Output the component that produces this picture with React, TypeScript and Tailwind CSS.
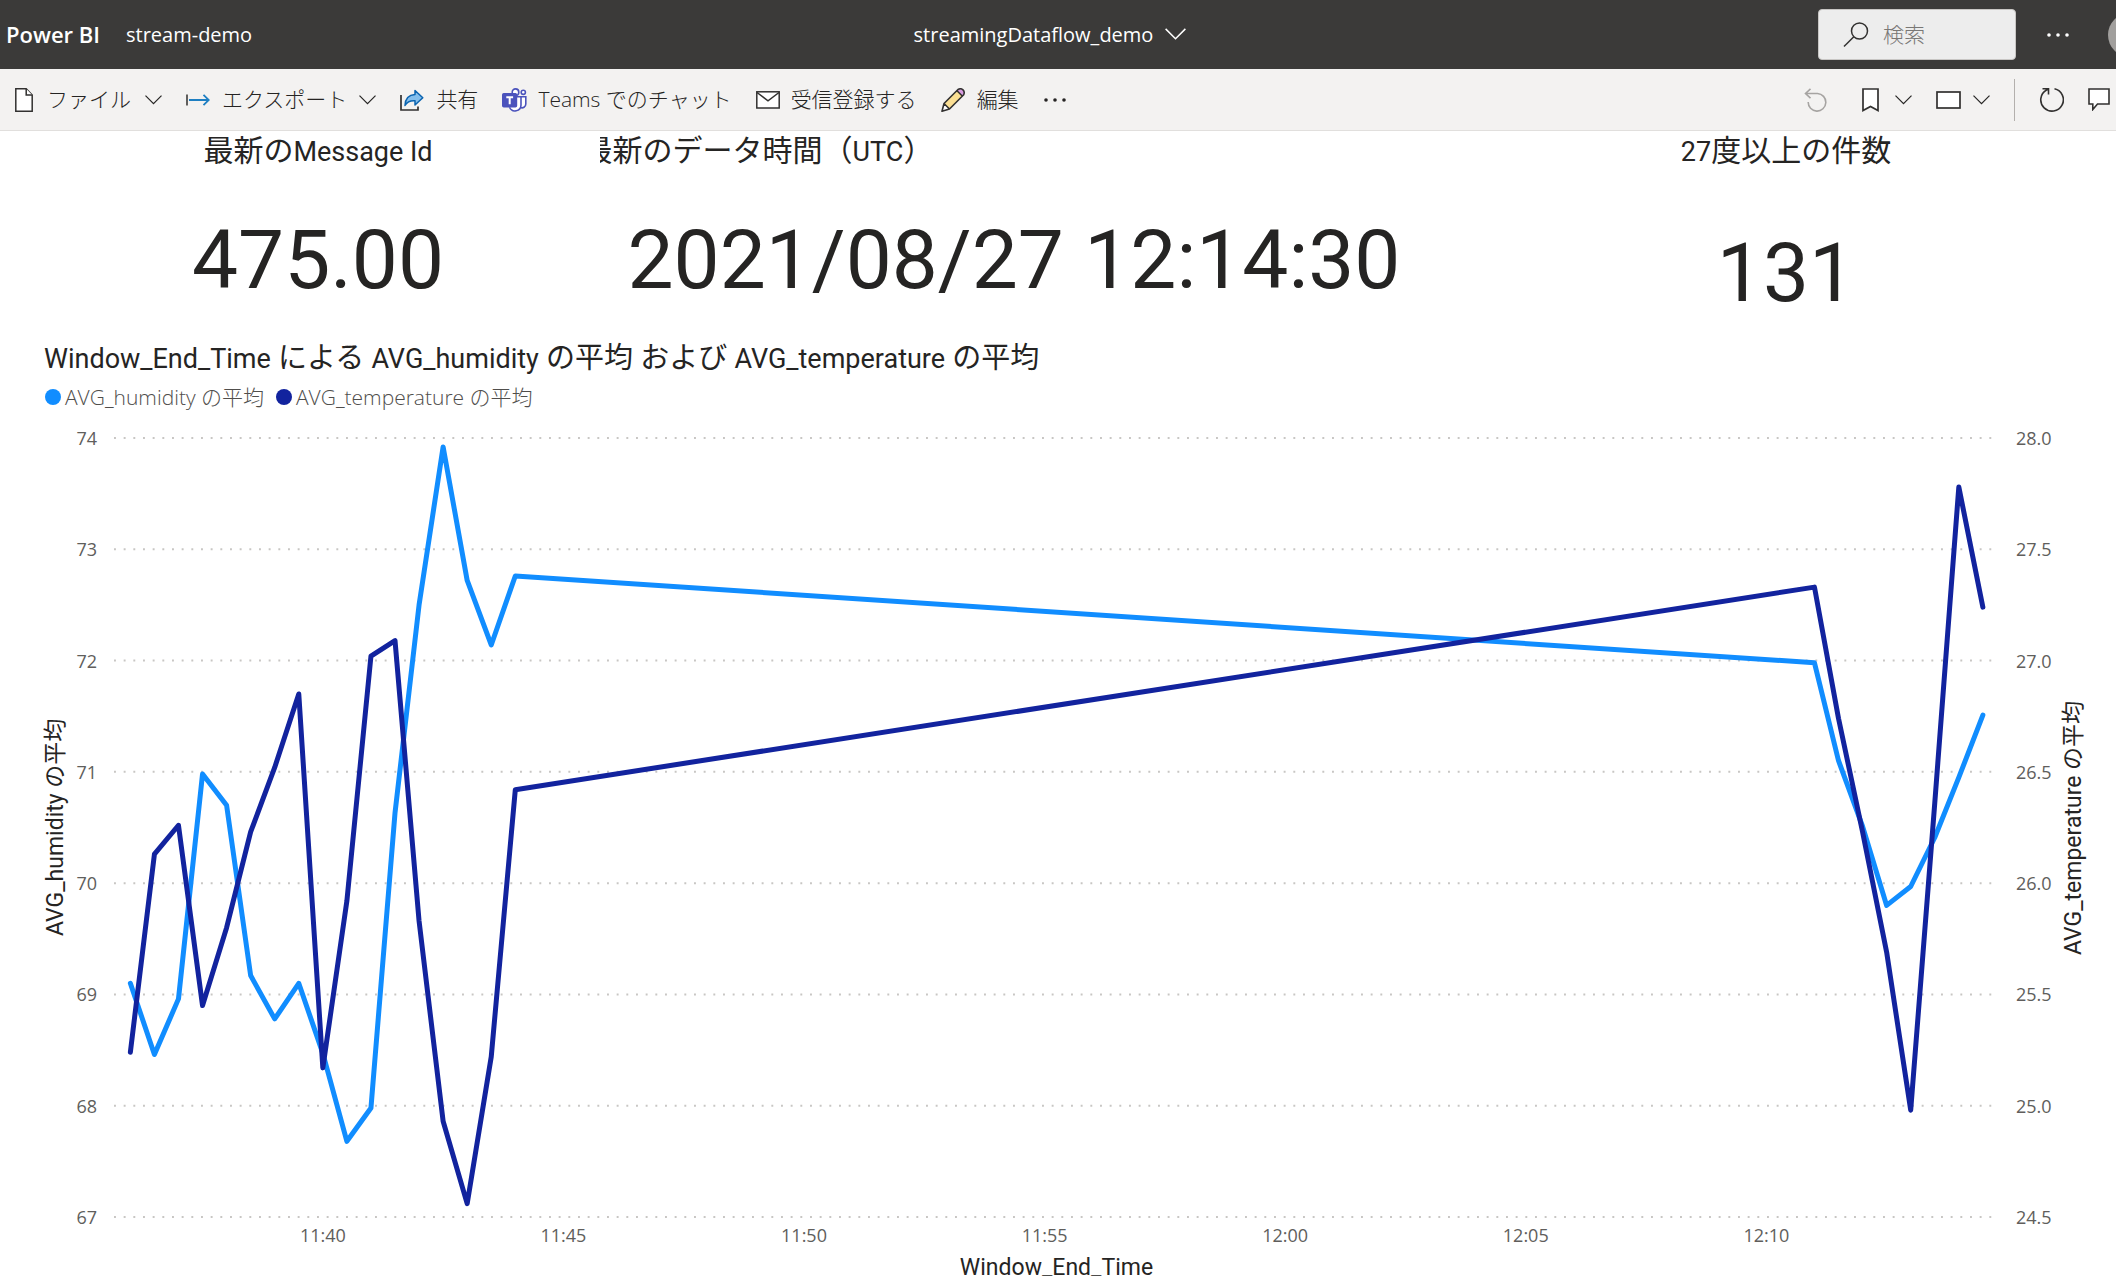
import React from "react";

const UI = "font-['Open_Sans','Noto_Sans_CJK_JP',sans-serif]";
const DIN = "font-['Roboto','Noto_Sans_CJK_JP',sans-serif]";

/* Samples are [half-minute steps after 11:36:00, value]. */
const humidity: [number, number][] = [
  [0, 69.1], [1, 68.46], [2, 68.96], [3, 70.98], [4, 70.7], [5, 69.17], [6, 68.78], [7, 69.1], [8, 68.47],
  [9, 67.68], [10, 67.98], [11, 70.63], [12, 72.5], [13, 73.92], [14, 72.72], [15, 72.14], [16, 72.76],
  [70, 71.98], [71, 71.1], [72, 70.51], [73, 69.8], [74, 69.97], [75, 70.41], [76, 70.95], [77, 71.51],
];
const temperature: [number, number][] = [
  [0, 25.24], [1, 26.13], [2, 26.26], [3, 25.45], [4, 25.8], [5, 26.23], [6, 26.52], [7, 26.85], [8, 25.17],
  [9, 25.92], [10, 27.02], [11, 27.09], [12, 25.83], [13, 24.93], [14, 24.56], [15, 25.22], [16, 26.42],
  [70, 27.33], [71, 26.74], [72, 26.23], [73, 25.69], [74, 24.98], [75, 26.36], [76, 27.78], [77, 27.24],
];
const humidityTicks = ["74", "73", "72", "71", "70", "69", "68", "67"];
const temperatureTicks = ["28.0", "27.5", "27.0", "26.5", "26.0", "25.5", "25.0", "24.5"];
const timeTicks: [string, number][] = [
  ["11:40", 8], ["11:45", 18], ["11:50", 28], ["11:55", 38], ["12:00", 48], ["12:05", 58], ["12:10", 68],
];
const PAD = 0.68;
const SPAN = 78.35;

const toPoints = (data: [number, number][], max: number, scale: number) =>
  data.map(([x, v]) => `${x + PAD},${(max - v) * scale}`).join(" ");

/* Sets the Latin runs of a Japanese title a little smaller than its kanji. */
function Mixed({ text }: { text: string }) {
  return (
    <>
      {text.split(/([A-Za-z0-9_]+(?: [A-Za-z]+)*)/).map((part, i) =>
        i % 2 ? <span key={i} className="text-[27px]">{part}</span> : part
      )}
    </>
  );
}

function Chevron({ className = "w-[17px]" }: { className?: string }) {
  return (
    <svg viewBox="0 0 17 10" className={className} fill="none" stroke="currentColor" aria-hidden="true">
      <path d="M.5 .7 8.5 8.7 16.5 .7" strokeWidth="1.2" />
    </svg>
  );
}

function Dots() {
  return (
    <svg viewBox="0 0 24 6" className="w-6" fill="currentColor" aria-hidden="true">
      <circle cx="3" cy="3" r="1.8" /><circle cx="12" cy="3" r="1.8" /><circle cx="21" cy="3" r="1.8" />
    </svg>
  );
}

function FileIcon() {
  return (
    <svg viewBox="0 0 18 24" className="w-[18px]" fill="#fff" stroke="#323130" strokeWidth="1.5" aria-hidden="true">
      <path d="M.8.8h10.4l6 6.2v16.2H.8z" /><path d="M11.2.8V7h6" />
    </svg>
  );
}
function ExportIcon() {
  return (
    <svg viewBox="0 0 24 12" className="w-6" fill="none" aria-hidden="true">
      <path d="M1 .5v11" stroke="#3b3a39" strokeWidth="1.6" />
      <path d="M3 6h20M17.5 .8 22.8 6l-5.3 5.2" stroke="#1e7fc2" strokeWidth="1.8" />
    </svg>
  );
}
function ShareIcon() {
  return (
    <svg viewBox="0 0 24 22" className="w-6" fill="none" aria-hidden="true">
      <path d="M1 6v15h17v-3.500" stroke="#323130" strokeWidth="1.7" />
      <path d="M15 1.500 22.800 8.800 15 16v-4.200C10.500 11.500 7 13 5 16.500 5.300 10 9 6 15 5.600z" fill="#83beec" stroke="#0b64b0" strokeWidth="1.5" strokeLinejoin="round" />
    </svg>
  );
}
function TeamsIcon() {
  return (
    <svg viewBox="0 0 25 24" className="w-[25px]" fill="none" stroke="#4b53bc" strokeWidth="1.6" aria-hidden="true">
      <circle cx="13.500" cy="4.200" r="3.300" fill="#fff" />
      <circle cx="21.300" cy="4.300" r="2.100" fill="#fff" />
      <path d="M17 8.800h6.800v7.200a3.800 3.800 0 0 1-5.500 3.400" fill="#fff" />
      <path d="M8 8.800h11v8.200a6 6 0 0 1-11.500 2.300" fill="#fff" />
      <rect x=".8" y="5.800" width="13.600" height="13" rx="1" fill="#4b53bc" />
      <path d="M4.300 9.300h6.800M7.700 9.300v7" stroke="#fff" strokeWidth="2" />
    </svg>
  );
}
function MailIcon() {
  return (
    <svg viewBox="0 0 24 18" className="w-6" fill="#fff" stroke="#323130" strokeWidth="1.5" aria-hidden="true">
      <rect x=".8" y=".8" width="22.400" height="16.200" /><path d="m1 1.500 11 8.300L23 1.500" fill="none" />
    </svg>
  );
}
function PencilIcon() {
  return (
    <svg viewBox="0 0 25 24" className="w-[25px]" strokeLinejoin="round" aria-hidden="true">
      <path d="m3 15.500 14-14q3-1.600 5 .300t.700 5L8.500 21 1 23.200z" fill="#fbdf93" />
      <path d="m16.200 2.500 1.800-1.300q2.600-1 4.300.800t.700 4.300L21.500 8.300z" fill="#d79be0" />
      <path d="m3 15.500 5.500 5.500L1 23.200z" fill="#fff" />
      <path d="m3 15.500 14-14q3-1.600 5 .300t.700 5L8.500 21 1 23.200zl5.500 5.500M16 2.700l5.500 5.500" fill="none" stroke="#323130" strokeWidth="1.6" />
    </svg>
  );
}
function SearchIcon() {
  return (
    <svg viewBox="0 0 26 26" className="w-[26px] shrink-0" fill="none" stroke="#323130" strokeWidth="1.5" aria-hidden="true">
      <circle cx="16.500" cy="9" r="8" /><path d="M10.800 14.700 1 24.500" />
    </svg>
  );
}
function UndoIcon() {
  return (
    <svg viewBox="0 0 24 24" className="w-6" fill="none" stroke="#a6a4a2" strokeWidth="1.6" aria-hidden="true">
      <path d="M1.500 5.500h12a8.800 8.800 0 1 1-9.300 8.500M6.500 .8 1.500 5.500l5 4.700" />
    </svg>
  );
}
function BookmarkIcon() {
  return (
    <svg viewBox="0 0 17 24" className="w-[17px]" fill="#fff" stroke="#323130" strokeWidth="1.7" aria-hidden="true">
      <path d="M1 1h15v21.500l-7.500-4-7.500 4z" />
    </svg>
  );
}
function ViewIcon() {
  return (
    <svg viewBox="0 0 25 18" className="w-[25px]" fill="#fff" stroke="#323130" strokeWidth="1.7" aria-hidden="true">
      <rect x="1" y="1" width="23" height="16" />
    </svg>
  );
}
function RefreshIcon() {
  return (
    <svg viewBox="0 0 25 25" className="w-[25px]" fill="none" stroke="#323130" strokeWidth="1.6" aria-hidden="true">
      <path d="M15.500 1.800A11.300 11.300 0 1 1 7.500 3L9.500 2.200M3.500 1.800h6v5.700" />
    </svg>
  );
}
function CommentIcon() {
  return (
    <svg viewBox="0 0 22 23" className="w-[22px]" fill="#fff" stroke="#323130" strokeWidth="1.6" aria-hidden="true">
      <path d="M1 1h20v15H9.500L4.800 21.500V16H1z" />
    </svg>
  );
}

function ToolButton({ icon, label, menu, className = "" }: { icon: React.ReactNode; label: string; menu?: boolean; className?: string }) {
  return (
    <button type="button" className={`flex shrink-0 items-center whitespace-nowrap ${className}`}>
      {icon}
      <span>{label}</span>
      {menu && <Chevron className="w-[17px]" />}
    </button>
  );
}

function Header() {
  return (
    <header className="grid h-[69px] shrink-0 grid-cols-[1fr_auto_1fr] items-center bg-[#3b3a39] text-white">
      <div className="flex items-center gap-[26px] pl-[6px]">
        <a href="#home" className="text-[22px] font-semibold">Power BI</a>
        <a href="#workspace" className="text-xl">stream-demo</a>
      </div>
      <button type="button" className="mr-4 flex items-center gap-3 text-xl">
        streamingDataflow_demo
        <Chevron className="w-[21px]" />
      </button>
      <div className="flex items-center justify-end overflow-hidden">
        <label className="flex h-[51px] w-[198px] items-center gap-[14px] rounded-sm border border-[#c8c6c4] bg-[#ededed] pl-6">
          <SearchIcon />
          <input type="search" aria-label="検索" placeholder="検索" className="w-full min-w-0 bg-transparent text-[21px] font-light text-[#323130] outline-none placeholder:text-[#797775]" />
        </label>
        <button type="button" aria-label="その他" className="ml-[30px]"><Dots /></button>
        <div className="ml-[38px] w-2 shrink-0 overflow-hidden">
          <button type="button" aria-label="アカウント" className="block size-11 rounded-full bg-[#a19f9d]" />
        </div>
      </div>
    </header>
  );
}

function Toolbar() {
  return (
    <nav aria-label="ツール バー" className="flex h-[62px] shrink-0 items-center justify-between overflow-hidden border-b border-[#e1dfdd] bg-[#f3f2f1] pl-[15px] pr-[6px] text-[21px] font-light text-[#252423]">
      <div className="flex items-center gap-6">
        <ToolButton icon={<FileIcon />} label="ファイル" menu className="gap-[14px]" />
        <ToolButton icon={<ExportIcon />} label="エクスポート" menu className="gap-3" />
        <ToolButton icon={<ShareIcon />} label="共有" className="gap-3" />
        <ToolButton icon={<TeamsIcon />} label="Teams でのチャット" className="gap-[11px]" />
        <ToolButton icon={<MailIcon />} label="受信登録する" className="gap-[11px]" />
        <ToolButton icon={<PencilIcon />} label="編集" className="gap-[11px]" />
        <button type="button" aria-label="その他のオプション"><Dots /></button>
      </div>
      <div className="flex items-center">
        <button type="button" aria-label="元に戻す" disabled><UndoIcon /></button>
        <button type="button" aria-label="ブックマーク" className="ml-[34px] flex items-center gap-4"><BookmarkIcon /><Chevron /></button>
        <button type="button" aria-label="表示" className="ml-6 flex items-center gap-3"><ViewIcon /><Chevron /></button>
        <span className="mx-6 h-[42px] w-px bg-[#b3b0ad]" />
        <button type="button" aria-label="最新の情報に更新"><RefreshIcon /></button>
        <button type="button" aria-label="コメント" className="ml-6"><CommentIcon /></button>
      </div>
    </nav>
  );
}

function Card({ title, value, className = "", titleClass = "", valueClass = "" }: { title: string; value: string; className?: string; titleClass?: string; valueClass?: string }) {
  return (
    <section className={`flex flex-col whitespace-nowrap ${className}`}>
      <h2 className={`flex h-[38px] items-center justify-center overflow-hidden text-[30px] ${titleClass}`}>
        <span className="shrink-0"><Mixed text={title} /></span>
      </h2>
      <p className={`text-center text-[82px] leading-[98px] ${valueClass}`}>{value}</p>
    </section>
  );
}

function LegendItem({ label, dot }: { label: string; dot: string }) {
  return (
    <li className="flex items-center gap-1">
      <span className={`size-4 rounded-full ${dot}`} />
      {label}
    </li>
  );
}

function AxisLabels({ labels, className }: { labels: string[]; className: string }) {
  return (
    <ul className={`flex flex-col justify-between text-lg text-[#605e5c] ${className}`}>
      {labels.map((l) => (
        <li key={l} className="flex h-0 items-center">{l}</li>
      ))}
    </ul>
  );
}

function Plot() {
  return (
    <svg className="size-full overflow-visible" role="img" aria-label="湿度と温度の折れ線グラフ">
      {humidityTicks.map((t, i) => (
        <line key={t} x1="0" x2="100%" y1={`${(i / 7) * 100}%`} y2={`${(i / 7) * 100}%`} stroke="#c8c6c4" strokeWidth="2" pathLength={195} strokeDasharray="0.2 0.8" />
      ))}
      <svg width="100%" height="100%" viewBox={`0 0 ${SPAN} 7`} preserveAspectRatio="none" className="overflow-visible" fill="none" strokeWidth="5" strokeLinecap="round" strokeLinejoin="round">
        <polyline points={toPoints(humidity, 74, 1)} stroke="#118dff" vectorEffect="non-scaling-stroke" />
        <polyline points={toPoints(temperature, 28, 2)} stroke="#12239e" vectorEffect="non-scaling-stroke" />
      </svg>
    </svg>
  );
}

const sideTitle = "rotate-180 whitespace-nowrap text-center text-[23px] leading-7 [writing-mode:vertical-rl] [text-orientation:sideways]";

export default function App() {
  return (
    <div className={`flex h-screen flex-col overflow-hidden bg-white text-[#252423] ${UI}`}>
      <Header />
      <Toolbar />
      <main className="flex min-h-0 flex-1 flex-col">
        <div className={`grid shrink-0 grid-cols-[600fr_828fr_688fr] ${DIN}`}>
          <Card title="最新のMessage Id" value="475.00" className="pl-9" valueClass="mt-[42px]" />
          <Card title="最新のデータ時間（UTC）" value="2021/08/27 12:14:30" titleClass="w-[316px]" valueClass="mt-[42px]" />
          <Card title="27度以上の件数" value="131" className="pl-7" valueClass="mt-[55px]" />
        </div>
        <section className="flex min-h-0 flex-1 flex-col">
          <h2 className={`mt-4 pl-11 text-[29px] leading-10 ${DIN}`}>
            <Mixed text="Window_End_Time による AVG_humidity の平均 および AVG_temperature の平均" />
          </h2>
          <ul className="flex gap-3 pl-[45px] text-[21px] leading-9 font-light text-[#504e4c]">
            <LegendItem label="AVG_humidity の平均" dot="bg-[#118dff]" />
            <LegendItem label="AVG_temperature の平均" dot="bg-[#12239e]" />
          </ul>
          <div className="mt-[23px] grid min-h-0 flex-1 grid-cols-[114px_1fr_117px]">
            <div className="flex justify-between pr-[17px] pl-[42px]">
              <h3 className={`${sideTitle} ${DIN}`}>AVG_humidity の平均</h3>
              <AxisLabels labels={humidityTicks} className="items-end" />
            </div>
            <Plot />
            <div className="flex justify-between pr-[28px] pl-[17px]">
              <AxisLabels labels={temperatureTicks} className="items-start" />
              <h3 className={`${sideTitle} ${DIN}`}>AVG_temperature の平均</h3>
            </div>
          </div>
          <div className="mr-[117px] ml-[114px] h-[59px] shrink-0">
            <div className="relative h-[37px] text-lg text-[#605e5c]">
              {timeTicks.map(([label, step]) => (
                <span key={label} className="absolute top-1 -translate-x-1/2" style={{ left: `${((step + PAD) / SPAN) * 100}%` }}>{label}</span>
              ))}
            </div>
            <h3 className={`text-center text-[23px] leading-7 ${DIN}`}>Window_End_Time</h3>
          </div>
        </section>
      </main>
    </div>
  );
}
